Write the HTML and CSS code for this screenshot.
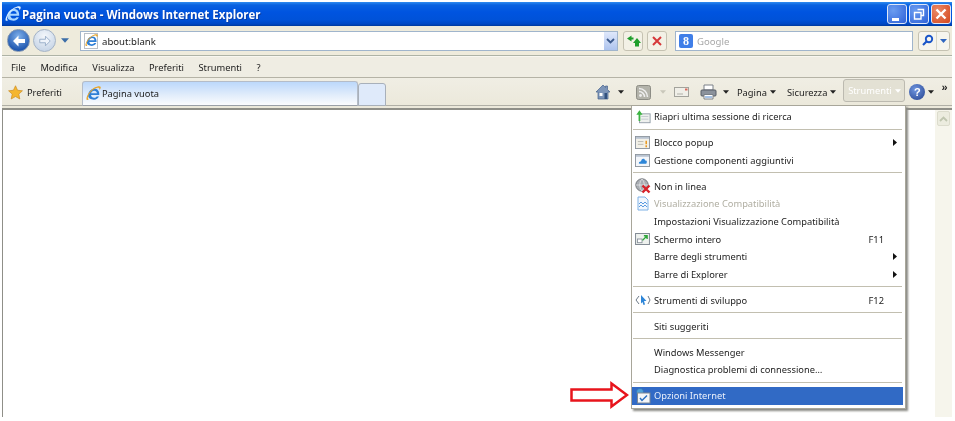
FILE: index.html
```html
<!DOCTYPE html>
<html lang="it">
<head>
<meta charset="utf-8">
<title>Pagina vuota - Windows Internet Explorer</title>
<link rel="stylesheet" href="styles.css">
</head>
<body>
<svg class="defs" width="0" height="0" aria-hidden="true">
  <defs>
    <symbol id="ie" viewBox="1 1 14 14">
      <path d="M3 10.200C3 6.500 5.600 3.600 9 3.600c2.600 0 4.400 1.900 4.400 4.900v1H5.700c.2 1.600 1.300 2.500 2.900 2.500 1.100 0 1.900-.4 2.400-1.200h2.100c-.8 1.900-2.500 3-4.700 3C5.200 13.800 3 12.400 3 10.200zM5.800 7.800h5.400C11 6.300 10.200 5.400 8.700 5.400c-1.500 0-2.600 1-2.900 2.400z" fill="currentColor"/>
      <path class="e-swoosh" d="M1.500 13.500C1 11 4.500 5 9 2.500c2.500-1.400 5-1.800 5.600-.8.400.7-.1 2-1 3.200.2-1-.1-1.900-1-2.200C10 2 5 6 3 10.500c-.5 1.300-.3 2.400.6 2.900C2.700 14.200 1.800 14.200 1.500 13.500z"/>
    </symbol>
    <symbol id="arrow-down" viewBox="0 0 7 4">
      <path d="M0 0h7L3.500 4z"/>
    </symbol>
    <symbol id="sub" viewBox="0 0 4 7">
      <path d="M0 0l4 3.500L0 7z"/>
    </symbol>
  </defs>
</svg>

<div class="window">
  <header class="titlebar">
    <svg class="title-ie"><use href="#ie"/></svg>
    <h1 class="title">Pagina vuota - Windows Internet Explorer</h1>
    <div class="win-buttons">
      <span class="win-btn"><span class="glyph-min"></span></span>
      <span class="win-btn"><svg width="14" height="14" viewBox="0 0 14 14"><path d="M5.500 2.500h6v6h-2M2.500 5.500h6.500v6.500H2.500z" fill="none" stroke="#fff" stroke-width="1.400"/></svg></span>
      <span class="win-btn win-close"><svg width="14" height="14" viewBox="0 0 14 14"><path d="M2.500 2.500l9 9M11.500 2.500l-9 9" stroke="#fff" stroke-width="2.400"/></svg></span>
    </div>
  </header>

  <div class="navbar">
    <span class="nav-back"><svg width="16" height="16" viewBox="0 0 16 16"><path d="M2 8l5.500-5.500V6H14v4H7.500v3.500z" fill="#fff"/></svg></span>
    <span class="nav-fwd"><svg width="14" height="14" viewBox="0 0 16 16"><path d="M14 8L8.500 2.500V6H2v4h6.500v3.500z" fill="#eef3fa" stroke="#93a9c6"/></svg></span>
    <svg class="nav-drop"><use href="#arrow-down"/></svg>
    <div class="address">
      <span class="page-icon"><svg class="blue-e" width="13" height="13"><use href="#ie"/></svg></span>
      <span class="address-text">about:blank</span>
      <span class="address-drop"><svg width="9" height="6" viewBox="0 0 9 6"><path d="M1 1l3.500 3.500L8 1" fill="none" stroke="#3c5a8c" stroke-width="1.800"/></svg></span>
    </div>
    <span class="tool-btn"><svg width="15" height="14" viewBox="0 0 15 14"><path d="M5.500 7.500V5.500h2v-2h-2V1.500L1 4.500zM9 12.500V9H7l4-5 4 5h-2v3.500z" fill="#1f9e2c"/></svg></span>
    <span class="tool-btn"><svg width="12" height="12" viewBox="0 0 12 12"><path d="M2 2l8 8M10 2l-8 8" stroke="#d6393a" stroke-width="2"/></svg></span>
    <div class="search">
      <span class="g-icon">8</span>
      <span class="search-text">Google</span>
    </div>
    <div class="search-btns">
      <span class="search-go"><svg width="13" height="13" viewBox="0 0 13 13"><circle cx="8" cy="5" r="3.200" fill="none" stroke="#1a55c8" stroke-width="1.900"/><path d="M5.500 7.500L2 11" stroke="#1a55c8" stroke-width="2.200"/></svg></span>
      <span class="search-drop"><svg width="7" height="4"><use href="#arrow-down"/></svg></span>
    </div>
  </div>

  <nav class="menubar">
    <span>File</span>
    <span>Modifica</span>
    <span>Visualizza</span>
    <span>Preferiti</span>
    <span>Strumenti</span>
    <span>?</span>
  </nav>

  <div class="commandbar">
    <span class="favs">
      <svg width="15" height="15" viewBox="0 0 16 16"><path d="M8 .8l2.200 4.800 5.200.6-3.900 3.500 1.100 5.200L8 12.300l-4.600 2.600 1.100-5.200L.6 6.200l5.200-.6z" fill="#f5b62f" stroke="#c98a1e" stroke-width=".7"/></svg>
      <span>Preferiti</span>
    </span>
    <div class="tab">
      <svg class="blue-e" width="15" height="15"><use href="#ie"/></svg>
      <span>Pagina vuota</span>
    </div>
    <div class="tab-new"></div>
    <div class="cmd-tools">
      <svg class="c-home" width="16" height="16" viewBox="0 0 16 16"><path d="M8 1L1 8h2v7h10V8h2l-2.500-2.500V2h-2v1.500z" fill="#7d95b8" stroke="#46628c" stroke-width=".7"/><path d="M4.500 9h3v3h-3z" fill="#fff"/><path d="M9.500 9H12v6H9.500z" fill="#31507e"/></svg>
      <svg class="c-arrow c-a1"><use href="#arrow-down"/></svg>
      <svg class="c-rss" width="15" height="15" viewBox="0 0 15 15"><rect x=".5" y=".5" width="14" height="14" rx="2" fill="#b3b3aa" stroke="#8d8d85"/><circle cx="4.500" cy="10.500" r="1.400" fill="#eee"/><path d="M3 6.500a5.500 5.500 0 015.500 5.500M3 3.500A8.500 8.500 0 0111.500 12" fill="none" stroke="#eee" stroke-width="1.500"/></svg>
      <svg class="c-arrow c-a2 c-faded"><use href="#arrow-down"/></svg>
      <svg class="c-mail" width="15" height="12" viewBox="0 0 15 12"><rect x=".5" y="1.500" width="14" height="9" fill="#f0efe8" stroke="#a3a39c"/><path d="M3 8h6" stroke="#b0b0a8"/><rect x="11" y="2.500" width="2.500" height="2" fill="#d86a5c"/></svg>
      <svg class="c-print" width="17" height="16" viewBox="0 0 17 16"><path d="M4 1h9v5H4z" fill="#fff" stroke="#7a8088"/><rect x="1" y="6" width="15" height="6" rx="1" fill="#8b929c" stroke="#565c66"/><path d="M4 10.500h9V15H4z" fill="#fff" stroke="#7a8088"/><path d="M5 13h7" stroke="#4f86cc"/></svg>
      <svg class="c-arrow c-a3"><use href="#arrow-down"/></svg>
      <span class="c-label c-pagina">Pagina <svg class="c-arrow-inline"><use href="#arrow-down"/></svg></span>
      <span class="c-label c-sic">Sicurezza <svg class="c-arrow-inline"><use href="#arrow-down"/></svg></span>
      <span class="c-active">Strumenti <svg class="c-arrow-inline c-white"><use href="#arrow-down"/></svg></span>
      <span class="c-help">?</span>
      <svg class="c-arrow c-a4"><use href="#arrow-down"/></svg>
      <span class="c-more">»</span>
    </div>
  </div>

  <main class="content">
    <div class="page"></div>
    <div class="scrollbar">
      <span class="scroll-up"><svg width="9" height="6" viewBox="0 0 9 6"><path d="M1 5l3.500-3.500L8 5" fill="none" stroke="#c0c6b0" stroke-width="1.800"/></svg></span>
    </div>
  </main>
</div>

<div class="dropdown">
  <div class="item"><span class="ico"><svg width="16" height="15" viewBox="0 0 18 16"><rect x="5" y="5" width="12" height="10" fill="#eef0ee" stroke="#8f9aa5"/><path d="M7 8h8M7 11h8" stroke="#c2c8cc"/><path d="M4 13V6H1.500L5 1l3.500 5H6v7z" fill="#3cb441"/></svg></span>Riapri ultima sessione di ricerca</div>
  <div class="sep"></div>
  <div class="item"><span class="ico"><svg width="15" height="13" viewBox="0 0 16 14"><rect x=".5" y=".5" width="15" height="13" fill="#f3f1e8" stroke="#8c949c"/><path d="M1 1h14v2H1z" fill="#b9c4d1"/><path d="M3 6h6M3 9h6" stroke="#b8b8b0"/><path d="M12 5v4M12 10v2" stroke="#e8961c" stroke-width="1.600"/></svg></span>Blocco popup<svg class="sub"><use href="#sub"/></svg></div>
  <div class="item"><span class="ico"><svg width="15" height="13" viewBox="0 0 16 14"><rect x=".5" y=".5" width="15" height="13" fill="#f3f6fa" stroke="#8c949c"/><path d="M1 1h14v2H1z" fill="#b9c4d1"/><path d="M4 10c0-2 2-1.500 2.500-2.500S7 5 9 5s1 2 2.500 2S13 9 12 10.500H5z" fill="#2e86d8"/></svg></span>Gestione componenti aggiuntivi</div>
  <div class="sep"></div>
  <div class="item"><span class="ico"><svg width="16" height="16" viewBox="0 0 16 16"><circle cx="7" cy="7" r="6.200" fill="#a9adb2" stroke="#75797e"/><path d="M1 7h12M7 1c-3 3-3 9 0 12M7 1c3 3 3 9 0 12" fill="none" stroke="#e4e6e8" stroke-width=".8"/><path d="M7.500 7.500l7 7M14.500 7.500l-7 7" stroke="#d8232a" stroke-width="2.400"/></svg></span>Non in linea</div>
  <div class="item item-off"><span class="ico"><svg width="14" height="15" viewBox="0 0 14 15"><path d="M2 1h7l3 3v10H2z" fill="#f2f7fd" stroke="#7fb2e6"/><path d="M3 8l2-2 2 2 2-2 2 2M3 11l2-2 2 2 2-2 2 2" fill="none" stroke="#5b9be0"/></svg></span>Visualizzazione Compatibilità</div>
  <div class="item"><span class="ico"></span>Impostazioni Visualizzazione Compatibilità</div>
  <div class="item"><span class="ico"><svg width="15" height="12" viewBox="0 0 16 13"><rect x=".5" y=".5" width="15" height="12" fill="#eef1ee" stroke="#79828c"/><rect x="2.500" y="6.500" width="5" height="4" fill="#fff" stroke="#8a929c"/><path d="M8 8l5-5M9.500 3H13v3.500" fill="none" stroke="#2ea63a" stroke-width="1.500"/></svg></span>Schermo intero<span class="key">F11</span></div>
  <div class="item"><span class="ico"></span>Barre degli strumenti<svg class="sub"><use href="#sub"/></svg></div>
  <div class="item"><span class="ico"></span>Barre di Explorer<svg class="sub"><use href="#sub"/></svg></div>
  <div class="sep"></div>
  <div class="item"><span class="ico"><svg width="16" height="12" viewBox="0 0 16 12"><path d="M4 2L1 6l3 4M13 2l2 4-2 4" fill="none" stroke="#6d7a88"/><path d="M6 1l5.500 6H9l1 3.500-1.500.5L7.500 8 6 9.500z" fill="#2e86d8"/></svg></span>Strumenti di sviluppo<span class="key">F12</span></div>
  <div class="sep"></div>
  <div class="item"><span class="ico"></span>Siti suggeriti</div>
  <div class="sep"></div>
  <div class="item"><span class="ico"></span>Windows Messenger</div>
  <div class="item"><span class="ico"></span>Diagnostica problemi di connessione…</div>
  <div class="sep"></div>
  <div class="item item-on"><span class="ico"><svg width="16" height="16" viewBox="0 0 16 16"><circle cx="5" cy="4" r="3.500" fill="#4fa0d8" stroke="#2f6fa8" stroke-width=".5"/><rect x="2.500" y="5" width="12.500" height="10" fill="#f4f6f8" stroke="#7d8894"/><path d="M5 10l2 2.500L12 7.500" fill="none" stroke="#2a6fc0" stroke-width="1.500"/></svg></span>Opzioni Internet</div>
</div>

<svg class="red-arrow" width="60" height="28" viewBox="0 0 60 28"><path d="M2.500 8.500h40v-6L58 14 42.500 25.500v-6h-40z" fill="#fff" stroke="#e8141c" stroke-width="2.500"/></svg>
</body>
</html>
```

FILE: styles.css
```css
* { box-sizing: border-box; }
html, body { margin: 0; padding: 0; }
body {
  width: 955px;
  height: 421px;
  overflow: hidden;
  background: #fff;
  position: relative;
  font-family: "Noto Sans", "Liberation Sans", sans-serif;
  font-size: 9.3px;
  color: #1c1c1c;
}
.defs { position: absolute; }
.e-swoosh { fill: var(--swoosh, #e8a52a); }
.blue-e { color: #2f7fd6; flex: none; }
.window {
  width: 950px;
  height: 415px;
  margin: 2px 0 0 2px;
  display: flex;
  flex-direction: column;
  filter: blur(0.35px);
}
.titlebar {
  height: 24px;
  flex: none;
  display: flex;
  align-items: center;
  padding: 0 1px 0 3px;
  color: #a9d6ff;
  --swoosh: #dcefff;
  background: linear-gradient(#2f8cf0 0, #0a62e0 3px, #0054e0 10px, #0052d8 18px, #0048c4 22px, #003a9c 24px);
}
.title-ie { width: 16px; height: 16px; flex: none; }
.title {
  margin: 0 0 0 1px;
  font: bold 11.5px "Open Sans", "Liberation Sans", sans-serif;
  color: #fff;
  text-shadow: 1px 1px 0 #0a3ea8;
  white-space: nowrap;
}
.win-buttons { margin-left: auto; display: flex; gap: 2px; }
.win-btn {
  width: 20px;
  height: 20px;
  border: 1px solid #dfe8f8;
  border-radius: 3px;
  background: radial-gradient(circle at 30% 30%, #6a9cf0, #2f62d8);
  display: flex;
  align-items: center;
  justify-content: center;
}
.win-close { background: radial-gradient(circle at 30% 30%, #eb8a68, #d4461c); }
.glyph-min { width: 7px; height: 3px; background: #fff; margin: 10px 4px 0 0; }

.navbar {
  height: 30px;
  flex: none;
  display: flex;
  align-items: center;
  background: #eeebdc;
  border-bottom: 1px solid #aeb3a6;
  padding: 0 0 0 5px;
}
.nav-back {
  width: 23px;
  height: 23px;
  border-radius: 50%;
  flex: none;
  display: flex;
  align-items: center;
  justify-content: center;
  background: radial-gradient(circle at 50% 30%, #7fb0ea, #2058b0 75%);
  border: 1px solid #7e93b0;
}
.nav-fwd {
  width: 23px;
  height: 23px;
  border-radius: 50%;
  flex: none;
  margin-left: 3px;
  display: flex;
  align-items: center;
  justify-content: center;
  background: radial-gradient(circle at 50% 30%, #f4f7fb, #bccde2);
  border: 1px solid #a4b3c6;
}
.nav-drop { width: 8px; height: 5px; margin: 0 0 0 5px; fill: #3c6ea8; flex: none; }
.address {
  width: 538px;
  height: 20px;
  margin-left: 11px;
  flex: none;
  background: #fff;
  border: 1px solid #a0b5cc;
  display: flex;
  align-items: center;
}
.page-icon {
  width: 14px;
  height: 16px;
  margin-left: 3px;
  border: 1px solid #b9bfc7;
  background: #fff;
  display: flex;
  align-items: center;
  justify-content: center;
  flex: none;
}
.address-text { margin-left: 4px; font-size: 9.6px; padding-top: 1px; }
.address-drop {
  margin-left: auto;
  width: 13px;
  height: 18px;
  background: linear-gradient(#dfe8fb, #aec4ee);
  display: flex;
  align-items: center;
  justify-content: center;
}
.tool-btn {
  width: 20px;
  height: 20px;
  margin-left: 4px;
  flex: none;
  background: #f3f1e6;
  border: 1px solid #c5c2b2;
  border-radius: 3px;
  display: flex;
  align-items: center;
  justify-content: center;
}
.address + .tool-btn { margin-left: 5px; }
.search {
  width: 238px;
  height: 20px;
  margin-left: 8px;
  flex: none;
  background: #fff;
  border: 1px solid #a0b5cc;
  display: flex;
  align-items: center;
}
.g-icon {
  width: 14px;
  height: 14px;
  margin-left: 3px;
  background: #3f7ee8;
  color: #fff;
  font: bold 12px/14px "Liberation Serif", serif;
  text-align: center;
  border-radius: 2px;
}
.search-text { margin-left: 4px; color: #a8a8a8; font-size: 9.6px; padding-top: 1px; }
.search-btns {
  margin-left: 5px;
  width: 32px;
  height: 20px;
  flex: none;
  display: flex;
  border: 1px solid #c5c2b2;
  border-radius: 3px;
  background: #f6f5ee;
}
.search-go { flex: 1; display: flex; align-items: center; justify-content: center; border-right: 1px solid #d8d6c8; }
.search-drop { width: 12px; display: flex; align-items: center; justify-content: center; fill: #2f66c0; }

.menubar {
  height: 22px;
  flex: none;
  display: flex;
  align-items: center;
  gap: 14.500px;
  padding: 1px 0 0 9px;
  background: #efede3;
  border-bottom: 1px solid #b5b3a6;
  border-top: 1px solid #f8f7f0;
}

.commandbar {
  height: 32px;
  flex: none;
  display: flex;
  align-items: flex-start;
  background: linear-gradient(to bottom, transparent 27px, #b0afa6 27px, #b0afa6 28px, transparent 28px), linear-gradient(#f0eee4, #ebe8da);
  border-bottom: 2px solid #8f8f88;
}
.favs {
  width: 80px;
  height: 28px;
  display: flex;
  align-items: center;
  gap: 4px;
  padding-left: 6px;
  flex: none;
}
.tab {
  width: 276px;
  height: 25px;
  margin-top: 3px;
  flex: none;
  display: flex;
  align-items: center;
  gap: 1px;
  padding-left: 3px;
  border: 1px solid #b4bcc8;
  border-bottom: 1px solid #9aa0a8;
  border-radius: 3px 3px 0 0;
  background: linear-gradient(#bcd8fb, #e0ecfb 55%, #fbfcfe);
}
.tab-new {
  width: 28px;
  height: 23px;
  margin-top: 5px;
  flex: none;
  border: 1px solid #a8b0ba;
  border-radius: 3px 3px 0 0;
  background: #dfeafa;
}
.cmd-tools {
  flex: 1;
  height: 28px;
  display: flex;
  align-items: center;
  position: relative;
}
.c-home { margin-left: 209px; flex: none; }
.c-arrow { width: 6px; height: 4px; fill: #222; flex: none; }
.c-a1 { margin-left: 7px; }
.c-rss { margin-left: 12px; flex: none; }
.c-a2 { margin-left: 9px; }
.c-faded { fill: #c9c7ba; }
.c-mail { margin-left: 8px; flex: none; }
.c-print { margin-left: 11px; flex: none; }
.c-a3 { margin-left: 6px; }
.c-label { white-space: nowrap; flex: none; display: flex; align-items: center; gap: 3px; }
.c-pagina { margin-left: 8px; }
.c-sic { margin-left: 11px; }
.c-arrow-inline { width: 6px; height: 4px; fill: #222; }
.c-active {
  width: 62px;
  height: 23px;
  margin: -3px 0 0 7px;
  flex: none;
  display: flex;
  align-items: center;
  justify-content: center;
  gap: 3px;
  color: #fff;
  background: #e3e1d4;
  border: 1px solid #bcbab0;
  border-radius: 3px;
  white-space: nowrap;
}
.c-white { fill: #fff; }
.c-help {
  width: 16px;
  height: 16px;
  margin-left: 4px;
  flex: none;
  border-radius: 50%;
  background: radial-gradient(circle at 40% 35%, #6f96e0, #23408c);
  color: #fff;
  font: bold 11px/16px "Liberation Sans", sans-serif;
  text-align: center;
}
.c-a4 { margin-left: 3px; }
.c-more { margin-left: 7px; margin-top: -10px; font: bold 11px "Liberation Sans", sans-serif; }

.content {
  flex: 1;
  display: flex;
  min-height: 0;
}
.page {
  flex: 1;
  background: #fff;
  border-left: 1px solid #8f8f88;
}
.scrollbar {
  width: 17px;
  flex: none;
  background: #f6f5ec;
  padding: 1px 0 0 2px;
}
.scroll-up {
  width: 13px;
  height: 15px;
  display: flex;
  align-items: center;
  justify-content: center;
  background: #ececdf;
  border: 1px solid #dcdccd;
  border-radius: 2px;
}

.dropdown {
  position: absolute;
  left: 631px;
  top: 105px;
  width: 275px;
  height: 304px;
  padding: 2px 2px 0 0;
  background: #fff;
  border: 1px solid #a8a69a;
  box-shadow: 2px 2px 2px #8a8a84;
  filter: blur(0.35px);
}
.item {
  height: 17.6px;
  display: flex;
  align-items: center;
  white-space: nowrap;
  position: relative;
}
.ico {
  width: 22px;
  height: 16px;
  flex: none;
  display: flex;
  align-items: center;
  justify-content: center;
  padding-right: 1px;
}
.sep {
  height: 8.4px;
  position: relative;
}
.sep::after {
  content: "";
  position: absolute;
  left: 1px;
  right: 1px;
  top: 3px;
  height: 1px;
  background: #c2bfb0;
}
.item-off { color: #b0aea2; }
.item-on {
  background: #316ac5;
  color: #eaf0fb;
}
.key { position: absolute; left: 236.500px; }
.sub { position: absolute; left: 261px; top: 5.500px; width: 4px; height: 7px; fill: #111; }

.red-arrow {
  position: absolute;
  left: 569px;
  top: 381px;
}
```
